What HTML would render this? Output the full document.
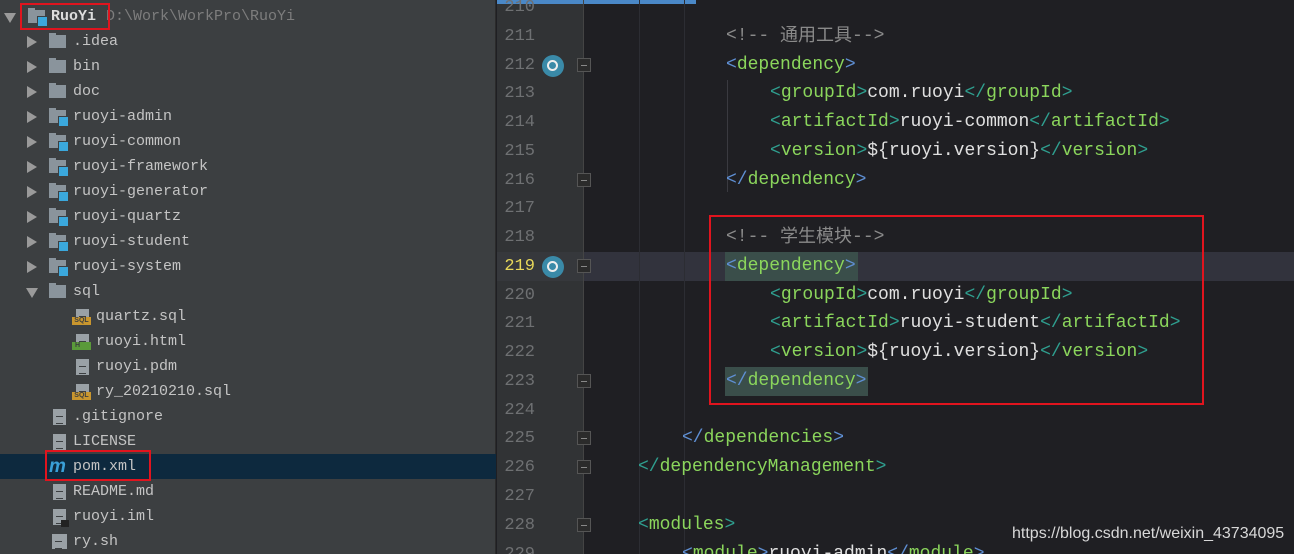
<!DOCTYPE html>
<html style="overflow:hidden;width:1294px;height:554px"><head><meta charset="utf-8"><style>
*{margin:0;padding:0;box-sizing:border-box}
body{width:1294px;height:554px;overflow:hidden;background:#1f1f23;position:relative;font-family:"Liberation Mono",monospace}
#side{position:absolute;left:0;top:0;width:496px;height:554px;background:#3c3f41;border-right:1px solid #2b2b2b}
.r{position:absolute;left:0;width:496px;height:25px;font-size:15px;line-height:25px;color:#c4c4c4;white-space:pre}
.ar{position:absolute;top:7px;width:0;height:0;border-top:6px solid transparent;border-bottom:6px solid transparent;border-left:10px solid #9a9a9a}
.ard{position:absolute;top:9px;width:0;height:0;border-left:6px solid transparent;border-right:6px solid transparent;border-top:10px solid #9a9a9a}
.fo{position:absolute;top:6px;width:17px;height:13px;background:#8a949c}
.fo:before{content:"";position:absolute;left:0;top:-2px;width:7px;height:3px;background:#8a949c}
.mod:after{content:"";position:absolute;right:-3px;bottom:-4px;width:9px;height:9px;background:#3ba8dc;border:1px solid #3c3f41}
.fi{position:absolute;top:5px;width:13px;height:16px;background:#9aa1a6}
.fi:after{content:"";position:absolute;left:3px;top:7px;width:7px;height:6px;border-top:1px solid #3c3f41;border-bottom:1px solid #3c3f41}
.tg{position:absolute;top:13px;height:8px;font:bold 7px/8px "Liberation Sans",sans-serif;color:#3c3f41;text-align:center}
.t{position:absolute;top:0}
#gut{position:absolute;left:497px;top:0;width:86px;height:554px;background:#313335}
.ln{position:absolute;left:497px;width:38px;text-align:right;font-size:17px;color:#6e7072;height:29px;line-height:29px}
.c{position:absolute;font-size:18px;height:29px;line-height:29px;white-space:pre;color:#e0e0e0}
.cj{font-family:'Noto Sans CJK SC',sans-serif;line-height:1;display:inline-block;vertical-align:-1px}
.b{color:#5f8fd3}.s{color:#2f9f8f}.n{color:#8bd65c}.cm{color:#8a8a8a}
.fold{position:absolute;left:577px;width:14px;height:14px;border:1px solid #555;background:#2b2b2b}
.fold:after{content:"";position:absolute;left:3px;top:6px;width:6px;height:1px;background:#888}
.mv{position:absolute;left:542px;width:22px;height:22px;border-radius:50%;background:#3a8aa8}
.mv:after{content:"";position:absolute;left:5px;top:5px;width:7px;height:7px;border:2px solid #eee;border-radius:50%}
.g{position:absolute;top:0;width:1px;height:554px;background:#2c2d33}
</style></head><body>
<div id="side">
<div class="r" style="top:4px"><div class="ard" style="left:4px"></div><div class="fo mod" style="left:28px"></div><span class="t" style="left:51px;color:#ddd;font-weight:bold">RuoYi</span><span class="t" style="left:106px;color:#7d7d7d">D:\Work\WorkPro\RuoYi</span></div>
<div style="position:absolute;left:20px;top:3px;width:90px;height:27px;border:2px solid #e0141e"></div>
<div class="r" style="top:29px"><div class="ar" style="left:27px"></div><div class="fo" style="left:49px"></div><span class="t" style="left:73px">.idea</span></div>
<div class="r" style="top:54px"><div class="ar" style="left:27px"></div><div class="fo" style="left:49px"></div><span class="t" style="left:73px">bin</span></div>
<div class="r" style="top:79px"><div class="ar" style="left:27px"></div><div class="fo" style="left:49px"></div><span class="t" style="left:73px">doc</span></div>
<div class="r" style="top:104px"><div class="ar" style="left:27px"></div><div class="fo mod" style="left:49px"></div><span class="t" style="left:73px">ruoyi-admin</span></div>
<div class="r" style="top:129px"><div class="ar" style="left:27px"></div><div class="fo mod" style="left:49px"></div><span class="t" style="left:73px">ruoyi-common</span></div>
<div class="r" style="top:154px"><div class="ar" style="left:27px"></div><div class="fo mod" style="left:49px"></div><span class="t" style="left:73px">ruoyi-framework</span></div>
<div class="r" style="top:179px"><div class="ar" style="left:27px"></div><div class="fo mod" style="left:49px"></div><span class="t" style="left:73px">ruoyi-generator</span></div>
<div class="r" style="top:204px"><div class="ar" style="left:27px"></div><div class="fo mod" style="left:49px"></div><span class="t" style="left:73px">ruoyi-quartz</span></div>
<div class="r" style="top:229px"><div class="ar" style="left:27px"></div><div class="fo mod" style="left:49px"></div><span class="t" style="left:73px">ruoyi-student</span></div>
<div class="r" style="top:254px"><div class="ar" style="left:27px"></div><div class="fo mod" style="left:49px"></div><span class="t" style="left:73px">ruoyi-system</span></div>
<div class="r" style="top:279px"><div class="ard" style="left:26px"></div><div class="fo" style="left:49px"></div><span class="t" style="left:73px">sql</span></div>
<div class="r" style="top:304px"><div class="fi" style="left:76px"></div><div class="tg" style="left:72px;width:19px;background:#c9962e">SQL</div><span class="t" style="left:96px">quartz.sql</span></div>
<div class="r" style="top:329px"><div class="fi" style="left:76px"></div><div class="tg" style="left:72px;width:19px;background:#5a9a3a;text-align:left;padding-left:3px">H</div><span class="t" style="left:96px">ruoyi.html</span></div>
<div class="r" style="top:354px"><div class="fi" style="left:76px"></div><span class="t" style="left:96px">ruoyi.pdm</span></div>
<div class="r" style="top:379px"><div class="fi" style="left:76px"></div><div class="tg" style="left:72px;width:19px;background:#c9962e">SQL</div><span class="t" style="left:96px">ry_20210210.sql</span></div>
<div class="r" style="top:404px"><div class="fi" style="left:53px"></div><span class="t" style="left:73px">.gitignore</span></div>
<div class="r" style="top:429px"><div class="fi" style="left:53px"></div><span class="t" style="left:73px">LICENSE</span></div>
<div class="r" style="top:454px;background:#0d293e"><span class="t" style="left:49px;color:#3aa0d8;font:italic bold 19px/25px 'Liberation Sans',sans-serif">m</span><span class="t" style="left:73px">pom.xml</span></div>
<div style="position:absolute;left:45px;top:450px;width:106px;height:31px;border:2px solid #e0141e"></div>
<div class="r" style="top:479px"><div class="fi" style="left:53px"></div><span class="t" style="left:73px">README.md</span></div>
<div class="r" style="top:504px"><div class="fi" style="left:53px"></div><div style="position:absolute;left:61px;top:16px;width:8px;height:7px;background:#222"></div><span class="t" style="left:73px">ruoyi.iml</span></div>
<div class="r" style="top:529px"><div class="fi" style="left:52px;width:15px;height:15px;background:#9aa1a6"></div><span class="t" style="left:73px">ry.sh</span></div>
</div>
<div id="gut"></div>
<div style="position:absolute;left:497px;top:0;width:199px;height:4px;background:#4a88c7"></div>
<div style="position:absolute;left:497px;top:252px;width:797px;height:29px;background:#32333d"></div>
<div style="position:absolute;left:497px;top:252px;width:86px;height:29px;background:#36383c"></div>
<div class="g" style="left:583px;background:#444"></div>
<div class="g" style="left:639px"></div>
<div class="g" style="left:684px"></div>
<div class="g" style="left:727px;top:80px;height:112px;background:#3a3a40"></div>
<div style="position:absolute;left:725px;top:252px;width:133px;height:29px;background:#3a4e4a"></div>
<div style="position:absolute;left:725px;top:367px;width:143px;height:29px;background:#3a4e4a"></div>

<div class="ln" style="top:-7px">210</div>
<div class="ln" style="top:22px">211</div>
<div class="ln" style="top:51px">212</div>
<div class="ln" style="top:79px">213</div>
<div class="ln" style="top:108px">214</div>
<div class="ln" style="top:137px">215</div>
<div class="ln" style="top:166px">216</div>
<div class="ln" style="top:194px">217</div>
<div class="ln" style="top:223px">218</div>
<div class="ln" style="top:252px;color:#e8d85a">219</div>
<div class="ln" style="top:281px">220</div>
<div class="ln" style="top:309px">221</div>
<div class="ln" style="top:338px">222</div>
<div class="ln" style="top:367px">223</div>
<div class="ln" style="top:396px">224</div>
<div class="ln" style="top:424px">225</div>
<div class="ln" style="top:453px">226</div>
<div class="ln" style="top:482px">227</div>
<div class="ln" style="top:511px">228</div>
<div class="ln" style="top:540px;height:14px;overflow:hidden">229</div>

<div class="mv" style="top:55px"></div>
<div class="mv" style="top:256px"></div>
<div class="fold" style="top:58px"></div>
<div class="fold" style="top:259px"></div>
<div class="fold" style="top:173px"></div>
<div class="fold" style="top:374px"></div>
<div class="fold" style="top:431px"></div>
<div class="fold" style="top:460px"></div>
<div class="fold" style="top:518px"></div>

<div class="c cm" style="left:726px;top:22px">&lt;!-- <span class="cj">通用工具</span>--&gt;</div>
<div class="c" style="left:726px;top:51px"><span class="b">&lt;</span><span class="n">dependency</span><span class="b">&gt;</span></div>
<div class="c" style="left:770px;top:79px"><span class="s">&lt;</span><span class="n">groupId</span><span class="s">&gt;</span>com.ruoyi<span class="s">&lt;/</span><span class="n">groupId</span><span class="s">&gt;</span></div>
<div class="c" style="left:770px;top:108px"><span class="s">&lt;</span><span class="n">artifactId</span><span class="s">&gt;</span>ruoyi-common<span class="s">&lt;/</span><span class="n">artifactId</span><span class="s">&gt;</span></div>
<div class="c" style="left:770px;top:137px"><span class="s">&lt;</span><span class="n">version</span><span class="s">&gt;</span>${ruoyi.version}<span class="s">&lt;/</span><span class="n">version</span><span class="s">&gt;</span></div>
<div class="c" style="left:726px;top:166px"><span class="b">&lt;/</span><span class="n">dependency</span><span class="b">&gt;</span></div>
<div class="c cm" style="left:726px;top:223px">&lt;!-- <span class="cj">学生模块</span>--&gt;</div>
<div class="c" style="left:726px;top:252px"><span class="b">&lt;</span><span class="n">dependency</span><span class="b">&gt;</span></div>
<div class="c" style="left:770px;top:281px"><span class="s">&lt;</span><span class="n">groupId</span><span class="s">&gt;</span>com.ruoyi<span class="s">&lt;/</span><span class="n">groupId</span><span class="s">&gt;</span></div>
<div class="c" style="left:770px;top:309px"><span class="s">&lt;</span><span class="n">artifactId</span><span class="s">&gt;</span>ruoyi-student<span class="s">&lt;/</span><span class="n">artifactId</span><span class="s">&gt;</span></div>
<div class="c" style="left:770px;top:338px"><span class="s">&lt;</span><span class="n">version</span><span class="s">&gt;</span>${ruoyi.version}<span class="s">&lt;/</span><span class="n">version</span><span class="s">&gt;</span></div>
<div class="c" style="left:726px;top:367px"><span class="b">&lt;/</span><span class="n">dependency</span><span class="b">&gt;</span></div>
<div class="c" style="left:682px;top:424px"><span class="b">&lt;/</span><span class="n">dependencies</span><span class="b">&gt;</span></div>
<div class="c" style="left:638px;top:453px"><span class="s">&lt;/</span><span class="n">dependencyManagement</span><span class="s">&gt;</span></div>
<div class="c" style="left:638px;top:511px"><span class="s">&lt;</span><span class="n">modules</span><span class="s">&gt;</span></div>
<div class="c" style="left:682px;top:540px;height:14px;overflow:hidden"><span class="b">&lt;</span><span class="n">module</span><span class="b">&gt;</span>ruoyi-admin<span class="b">&lt;/</span><span class="n">module</span><span class="b">&gt;</span></div>

<div style="position:absolute;left:709px;top:215px;width:495px;height:190px;border:2px solid #e0141e"></div>
<div style="position:absolute;left:1012px;top:524px;font:16px/20px 'Liberation Sans',sans-serif;color:#d8d8d8;background:rgba(31,31,35,0.6)">https://blog.csdn.net/weixin_43734095</div>
</body></html>
